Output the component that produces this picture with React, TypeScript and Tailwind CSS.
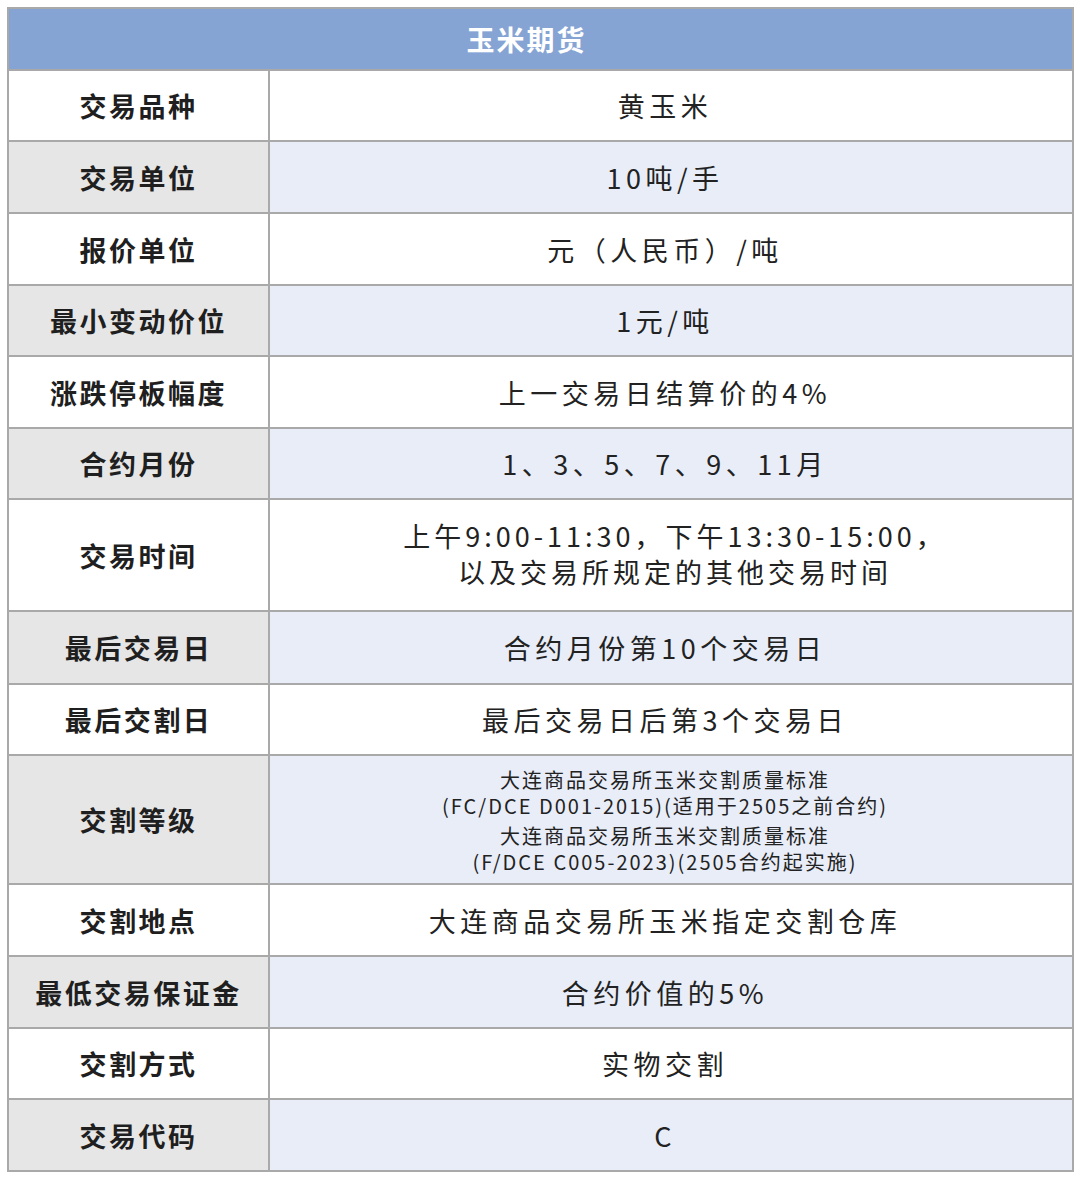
import React from "react";

type Row = { label: string; h: string; alt: boolean; content: React.ReactNode };

const rows: Row[] = [
  { label: "交易品种", h: "h-[71px]", alt: false, content: "黄玉米" },
  { label: "交易单位", h: "h-[72px]", alt: true, content: "10吨/手" },
  { label: "报价单位", h: "h-[72px]", alt: false, content: "元（人民币）/吨" },
  { label: "最小变动价位", h: "h-[71px]", alt: true, content: "1元/吨" },
  { label: "涨跌停板幅度", h: "h-[72px]", alt: false, content: "上一交易日结算价的4%" },
  { label: "合约月份", h: "h-[71px]", alt: true, content: "1、3、5、7、9、11月" },
  {
    label: "交易时间",
    h: "h-[112px]",
    alt: false,
    content: (
      <div className="ml-[20px] mb-[4px] leading-[36px] tracking-[4px]">
        <div>上午9:00-11:30，下午13:30-15:00，</div>
        <div>以及交易所规定的其他交易时间</div>
      </div>
    ),
  },
  { label: "最后交易日", h: "h-[73px]", alt: true, content: "合约月份第10个交易日" },
  { label: "最后交割日", h: "h-[71px]", alt: false, content: "最后交易日后第3个交易日" },
  {
    label: "交割等级",
    h: "h-[129px]",
    alt: true,
    content: (
      <div className="flex flex-col gap-[4px] text-[20px] leading-[26px] tracking-[2px]">
        <div>
          <div>大连商品交易所玉米交割质量标准</div>
          <div>(FC/DCE D001-2015)(适用于2505之前合约)</div>
        </div>
        <div>
          <div>大连商品交易所玉米交割质量标准</div>
          <div>(F/DCE C005-2023)(2505合约起实施)</div>
        </div>
      </div>
    ),
  },
  { label: "交割地点", h: "h-[72px]", alt: false, content: "大连商品交易所玉米指定交割仓库" },
  { label: "最低交易保证金", h: "h-[72px]", alt: true, content: "合约价值的5%" },
  { label: "交割方式", h: "h-[71px]", alt: false, content: "实物交割" },
  { label: "交易代码", h: "h-[72px]", alt: true, content: "C" },
];

export default function App() {
  return (
    <div
      className="w-[1080px] h-[1182px] bg-white pt-[7px] pl-[7px]"
      style={{ fontFamily: '"Noto Sans CJK SC", "Noto Sans", sans-serif' }}
    >
      <div className="w-[1067px] border-t-2 border-l-2 border-r-2 border-[#a9a9a9]">
        <div className="h-[62px] border-b-2 border-[#a9a9a9] bg-[#85a4d4] flex items-center justify-center pr-[28px] text-white font-bold text-[28px] tracking-[2px]">
          玉米期货
        </div>
        {rows.map((r) => (
          <div
            key={r.label}
            className={`grid grid-cols-[261px_1fr] border-b-2 border-[#a9a9a9] ${r.h}`}
          >
            <div
              className={`border-r-2 border-[#a9a9a9] flex items-center justify-center pt-[2px] font-bold text-[27px] tracking-[2.5px] text-[#1f1f1f] ${
                r.alt ? "bg-[#e6e6e6]" : "bg-white"
              }`}
            >
              {r.label}
            </div>
            <div
              className={`flex items-center justify-center text-center pr-[12px] pt-[2px] text-[27px] tracking-[4.5px] text-[#222222] ${
                r.alt ? "bg-[#e8edf8]" : "bg-white"
              }`}
            >
              {r.content}
            </div>
          </div>
        ))}
      </div>
    </div>
  );
}
